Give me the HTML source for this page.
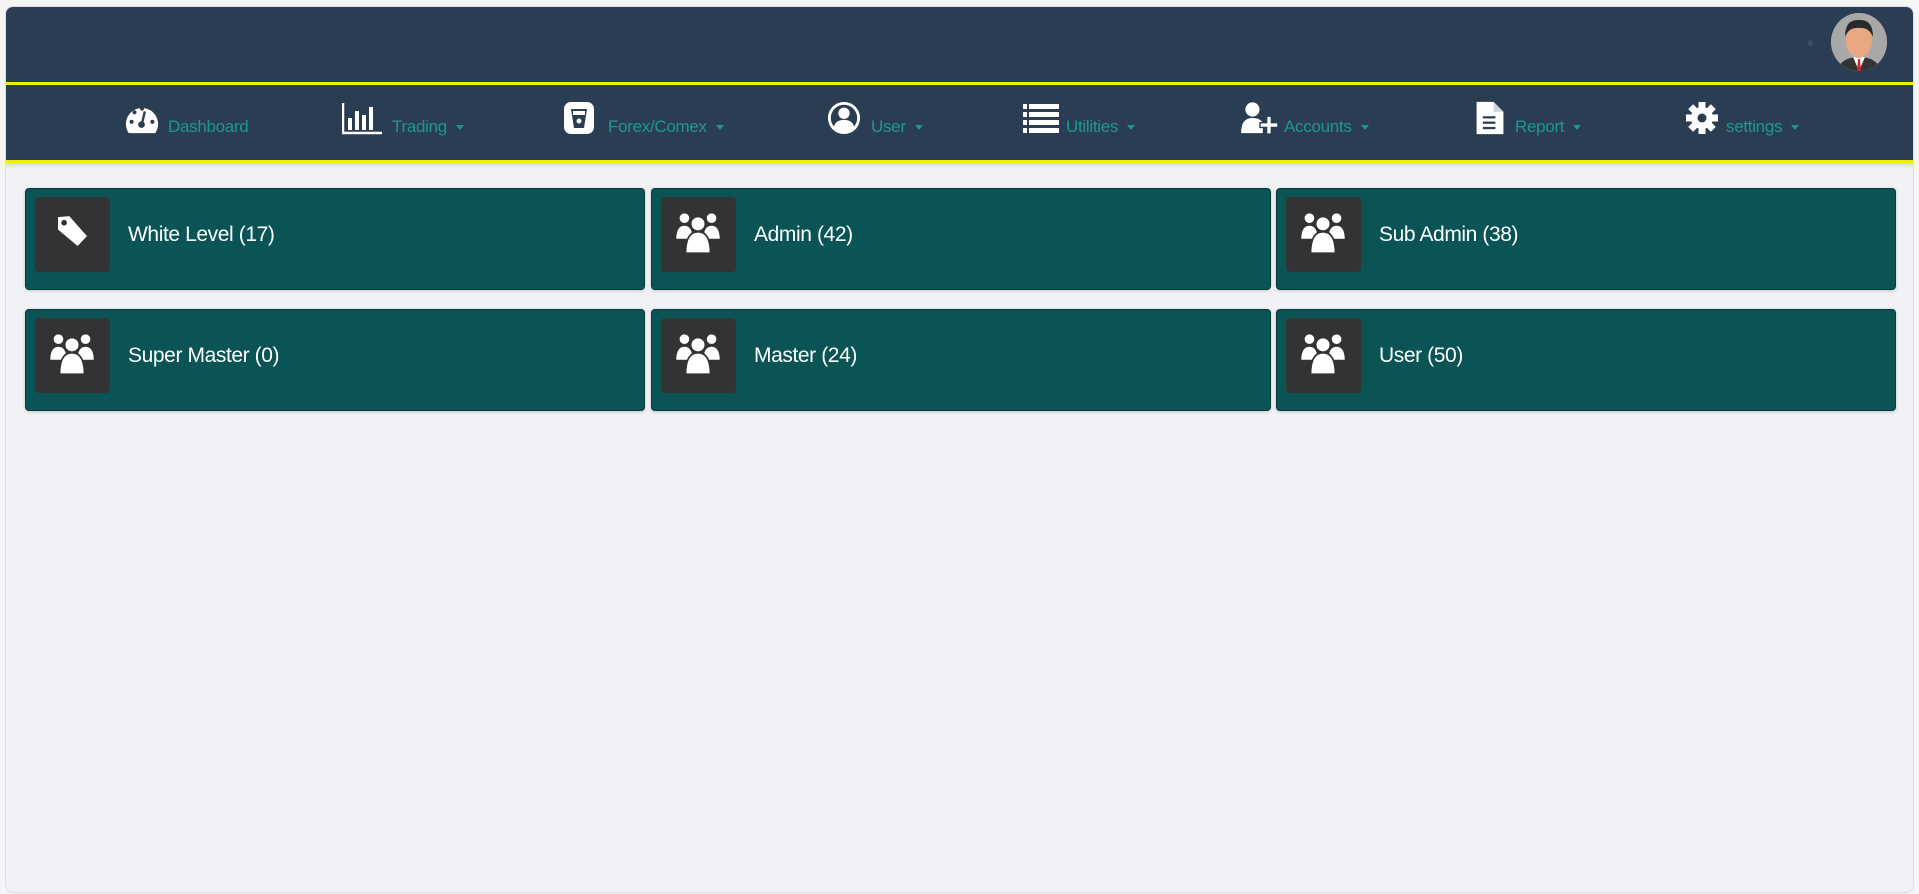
<!DOCTYPE html>
<html><head><meta charset="utf-8"><style>
*{box-sizing:border-box;margin:0;padding:0}
body{width:1919px;height:894px;background:#f5f5f5;font-family:"Liberation Sans",sans-serif;position:relative;overflow:hidden}
.wrap{position:absolute;left:5px;top:6px;width:1909px;height:887px;background:#f0f2f5;border:1px solid #dde;border-radius:8px;overflow:hidden}
.top{position:absolute;left:0;top:0;width:100%;height:76px;background:#2b3d52}
.y1{position:absolute;left:0;top:75px;width:100%;height:3px;background:#f2ee00}
.nav{position:absolute;left:0;top:78px;width:100%;height:75px;background:#2b3d52}
.y2{position:absolute;left:0;top:153px;width:100%;height:3px;background:#f2ee00;box-shadow:0 2px 3px rgba(0,0,0,.15)}
.av{position:absolute;left:1825px;top:6px;width:56px;height:58px;border-radius:50%;background:#9a9a9a;overflow:hidden}
.dot{position:absolute;left:1802px;top:33px;width:5px;height:6px;border-radius:50%;background:#3a4e66}
.ni{position:absolute;top:94px;height:34px}
.nt{position:absolute;top:110px;color:#1b9a8c;font-size:17px;letter-spacing:-.3px;white-space:nowrap}
.nt .c{display:inline-block;width:0;height:0;border-left:4px solid transparent;border-right:4px solid transparent;border-top:5px solid #1b9a8c;margin-left:9px;vertical-align:middle}
.card{position:absolute;width:620px;height:102px;background:#0b5456;border:1px solid #073a3c;border-radius:4px;box-shadow:0 1px 3px rgba(0,0,0,.2)}
.ib{position:absolute;left:9px;top:8px;width:75px;height:75px;background:#333;border-radius:4px}
.ib svg{position:absolute;left:11px;top:11px}
.lb{position:absolute;left:102px;top:34px;color:#fff;font-size:21px;letter-spacing:-.4px}
</style></head><body>
<div class="wrap">
<div class="top"></div><div class="y1"></div><div class="nav"></div><div class="y2"></div>
<div class="dot"></div>
<div class="av"><svg width="56" height="58" viewBox="0 0 56 58"><rect width="56" height="58" fill="#a8a8a8"/><path d="M6 58 Q10 44 28 44 Q46 44 50 58Z" fill="#333"/><path d="M22 44 L28 58 L34 44Z" fill="#fff"/><path d="M27 46 h2 l1 12 h-4z" fill="#d22"/><ellipse cx="28" cy="28" rx="13" ry="17" fill="#e8a882"/><path d="M14 24 Q14 6 28 7 Q42 6 42 24 Q38 14 28 15 Q18 14 14 24Z" fill="#2a2a2a"/></svg></div>

<svg class="ni" style="left:117px" width="38" height="36" viewBox="0 0 38 36"><path d="M5 34 A17 17 0 1 1 33 34 Z" fill="#fff"/><circle cx="8" cy="22" r="2.2" fill="#2b3d52"/><circle cx="11" cy="12" r="2.2" fill="#2b3d52"/><circle cx="19" cy="8" r="2.2" fill="#2b3d52"/><circle cx="30" cy="22" r="2.2" fill="#2b3d52"/><path d="M22 11 L19 24" stroke="#2b3d52" stroke-width="2.5"/><circle cx="18.5" cy="25" r="3.5" fill="#2b3d52"/></svg>
<div class="nt" style="left:162px">Dashboard</div>
<svg class="ni" style="left:336px" width="42" height="34" viewBox="0 0 42 34"><path d="M1 2 V32 H40" stroke="#fff" stroke-width="2.5" fill="none"/><rect x="6" y="17" width="4" height="12" fill="#fff"/><rect x="13" y="10" width="4" height="19" fill="#fff"/><rect x="20" y="14" width="4" height="15" fill="#fff"/><rect x="27" y="6" width="4" height="23" fill="#fff"/></svg>
<div class="nt" style="left:386px">Trading<span class="c"></span></div>
<svg class="ni" style="left:557px" width="32" height="34" viewBox="0 0 32 34"><rect x="1" y="1" width="30" height="32" rx="7" fill="#fff"/><path d="M8 8 H24 L21 27 H11Z" fill="#2b3d52"/><rect x="10" y="10" width="12" height="4" fill="#fff"/><circle cx="16" cy="20" r="2.5" fill="#fff"/></svg>
<div class="nt" style="left:602px">Forex/Comex<span class="c"></span></div>
<svg class="ni" style="left:820px" width="36" height="36" viewBox="0 0 36 36"><circle cx="18" cy="18" r="17" fill="#fff"/><circle cx="18" cy="18" r="14" fill="#2b3d52"/><circle cx="18" cy="13" r="6" fill="#fff"/><path d="M7 28 Q9 20 18 20 Q27 20 29 28 Q24 33 18 33 Q12 33 7 28Z" fill="#fff"/></svg>
<div class="nt" style="left:865px">User<span class="c"></span></div>
<svg class="ni" style="left:1017px" width="36" height="30" viewBox="0 0 36 30"><g fill="#fff"><rect x="0" y="1" width="4" height="5"/><rect x="6" y="1" width="30" height="5"/><rect x="0" y="9" width="4" height="5"/><rect x="6" y="9" width="30" height="5"/><rect x="0" y="17" width="4" height="5"/><rect x="6" y="17" width="30" height="5"/><rect x="0" y="25" width="4" height="5"/><rect x="6" y="25" width="30" height="5"/></g></svg>
<div class="nt" style="left:1060px">Utilities<span class="c"></span></div>
<svg class="ni" style="left:1233px" width="42" height="36" viewBox="0 0 42 36"><circle cx="13" cy="9" r="7.5" fill="#fff"/><path d="M1 34 Q1 18 13 18 Q22 18 24 24 V34Z" fill="#fff"/><path d="M28 16 h5 v7 h7 v5 h-7 v7 h-5 v-7 h-7 v-5 h7z" fill="#fff" stroke="#2b3d52" stroke-width="1.5"/></svg>
<div class="nt" style="left:1278px">Accounts<span class="c"></span></div>
<svg class="ni" style="left:1468px" width="32" height="38" viewBox="0 0 32 38"><path d="M1 1 H20 L31 12 V37 H1Z" fill="#fff"/><path d="M20 1 V12 H31" fill="#cfd6de"/><rect x="8" y="17" width="14" height="2.5" fill="#2b3d52"/><rect x="8" y="23" width="14" height="2.5" fill="#2b3d52"/><rect x="8" y="29" width="14" height="2.5" fill="#2b3d52"/></svg>
<div class="nt" style="left:1509px">Report<span class="c"></span></div>
<svg class="ni" style="left:1680px" width="32" height="34" viewBox="0 0 32 32"><g transform="translate(16 16)" fill="#fff"><circle r="11"/><g id="t"><rect x="-3.5" y="-16" width="7" height="7"/></g><use href="#t" transform="rotate(45)"/><use href="#t" transform="rotate(90)"/><use href="#t" transform="rotate(135)"/><use href="#t" transform="rotate(180)"/><use href="#t" transform="rotate(225)"/><use href="#t" transform="rotate(270)"/><use href="#t" transform="rotate(315)"/><circle r="4.5" fill="#2b3d52"/></g></svg>
<div class="nt" style="left:1720px">settings<span class="c"></span></div>

<div class="card" style="left:19px;top:181px"><div class="ib"><svg width="52" height="52" viewBox="0 0 46 46"><path d="M12 7 H22 L36 26 L27 34 L11 18Z" fill="#fff" transform="rotate(-5 23 23)"/><circle cx="16" cy="13" r="2.5" fill="#333"/></svg></div><div class="lb">White Level (17)</div></div>
<div class="card" style="left:645px;top:181px"><div class="ib"><svg width="52" height="52" viewBox="0 0 46 46"><g fill="#fff" stroke="#333" stroke-width="1.5"><circle cx="11" cy="9" r="5"/><circle cx="35" cy="9" r="5"/><path d="M3 28 Q3 15 11 15 Q19 15 19 28Z"/><path d="M27 28 Q27 15 35 15 Q43 15 43 28Z"/><circle cx="23" cy="14" r="6.5"/><path d="M12 40 Q12 21 23 21 Q34 21 34 40Z"/></g></svg></div><div class="lb">Admin (42)</div></div>
<div class="card" style="left:1270px;top:181px"><div class="ib"><svg width="52" height="52" viewBox="0 0 46 46"><g fill="#fff" stroke="#333" stroke-width="1.5"><circle cx="11" cy="9" r="5"/><circle cx="35" cy="9" r="5"/><path d="M3 28 Q3 15 11 15 Q19 15 19 28Z"/><path d="M27 28 Q27 15 35 15 Q43 15 43 28Z"/><circle cx="23" cy="14" r="6.5"/><path d="M12 40 Q12 21 23 21 Q34 21 34 40Z"/></g></svg></div><div class="lb">Sub Admin (38)</div></div>
<div class="card" style="left:19px;top:302px"><div class="ib"><svg width="52" height="52" viewBox="0 0 46 46"><g fill="#fff" stroke="#333" stroke-width="1.5"><circle cx="11" cy="9" r="5"/><circle cx="35" cy="9" r="5"/><path d="M3 28 Q3 15 11 15 Q19 15 19 28Z"/><path d="M27 28 Q27 15 35 15 Q43 15 43 28Z"/><circle cx="23" cy="14" r="6.5"/><path d="M12 40 Q12 21 23 21 Q34 21 34 40Z"/></g></svg></div><div class="lb">Super Master (0)</div></div>
<div class="card" style="left:645px;top:302px"><div class="ib"><svg width="52" height="52" viewBox="0 0 46 46"><g fill="#fff" stroke="#333" stroke-width="1.5"><circle cx="11" cy="9" r="5"/><circle cx="35" cy="9" r="5"/><path d="M3 28 Q3 15 11 15 Q19 15 19 28Z"/><path d="M27 28 Q27 15 35 15 Q43 15 43 28Z"/><circle cx="23" cy="14" r="6.5"/><path d="M12 40 Q12 21 23 21 Q34 21 34 40Z"/></g></svg></div><div class="lb">Master (24)</div></div>
<div class="card" style="left:1270px;top:302px"><div class="ib"><svg width="52" height="52" viewBox="0 0 46 46"><g fill="#fff" stroke="#333" stroke-width="1.5"><circle cx="11" cy="9" r="5"/><circle cx="35" cy="9" r="5"/><path d="M3 28 Q3 15 11 15 Q19 15 19 28Z"/><path d="M27 28 Q27 15 35 15 Q43 15 43 28Z"/><circle cx="23" cy="14" r="6.5"/><path d="M12 40 Q12 21 23 21 Q34 21 34 40Z"/></g></svg></div><div class="lb">User (50)</div></div>
</div>
</body></html>
